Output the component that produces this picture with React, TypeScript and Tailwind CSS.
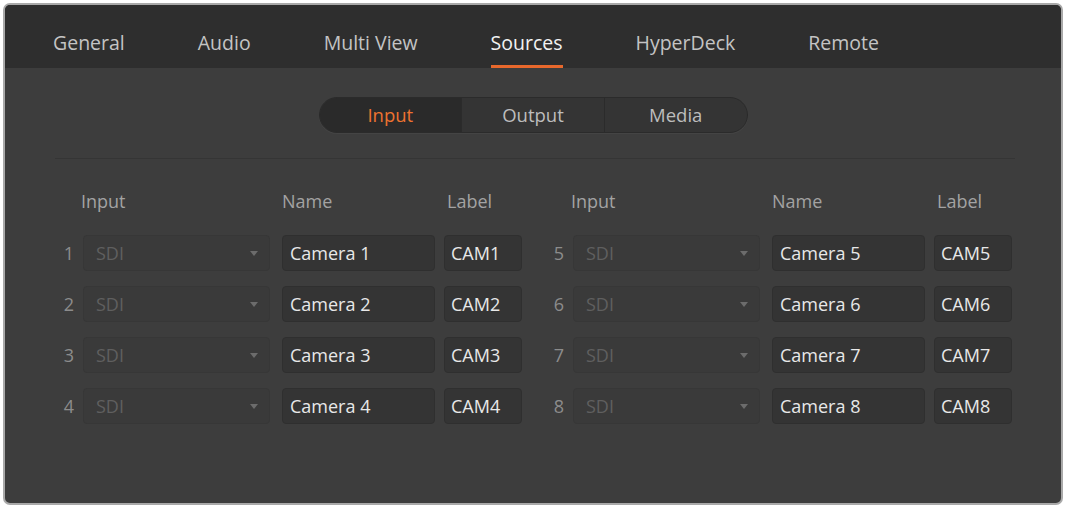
const tabs = ["General", "Audio", "Multi View", "Sources", "HyperDeck", "Remote"];
const segments = ["Input", "Output", "Media"];

type Row = { n: number; name: string; label: string };

const left: Row[] = [1, 2, 3, 4].map((n) => ({ n, name: `Camera ${n}`, label: `CAM${n}` }));
const right: Row[] = [5, 6, 7, 8].map((n) => ({ n, name: `Camera ${n}`, label: `CAM${n}` }));

function SourceGroup({ rows }: { rows: Row[] }) {
  return (
    <div className="w-[467px]">
      <div className="flex h-[24px] items-center text-[18px] text-[#a3a3a3]">
        <div className="w-[26px]" />
        <div className="w-[201px]">Input</div>
        <div className="w-[165px]">Name</div>
        <div>Label</div>
      </div>
      <div className="mt-[22px] flex flex-col gap-[15px]">
        {rows.map((r) => (
          <div key={r.n} className="flex h-[36px] items-center">
            <div className="w-[28px] text-center text-[18px] text-[#8c8c8c]">{r.n}</div>
            <div className="flex h-full w-[187px] items-center justify-between rounded-[4px] border border-[#373737] bg-[#3a3a3a] pl-[12px] pr-[10px]">
              <span className="text-[18px] text-[#5f5f5f]">SDI</span>
              <svg width="10" height="7" viewBox="0 0 10 7">
                <path d="M1 1 L9 1 L5 6 Z" fill="#6c6c6c" />
              </svg>
            </div>
            <div className="ml-[12px] flex h-full w-[153px] items-center rounded-[4px] border border-[#2f2f2f] bg-[#343434] px-[7px] text-[18px] text-[#e8e8e8]">
              {r.name}
            </div>
            <div className="ml-[9px] flex h-full w-[78px] items-center rounded-[4px] border border-[#2f2f2f] bg-[#343434] px-[6px] text-[18px] text-[#e8e8e8]">
              {r.label}
            </div>
          </div>
        ))}
      </div>
    </div>
  );
}

export default function App() {
  return (
    <div className="h-[508px] w-[1066px] bg-white p-[3px]" style={{ fontFamily: '"Open Sans", "Noto Sans", sans-serif' }}>
      <div className="h-[502px] w-[1060px] overflow-hidden rounded-[7px] border-2 border-[#a9a9a9] bg-[#3d3d3d]">
        {/* top tabs */}
        <div className="flex h-[63px] items-end gap-[55px] bg-[#2e2e2e] pl-[39px]">
          {tabs.map((t) => {
            const active = t === "Sources";
            return (
              <div
                key={t}
                className={`flex h-full flex-col justify-end px-[9px] text-[19.5px] ${active ? "text-[#f2f2f2]" : "text-[#c4c4c4]"}`}
              >
                <span className="pb-[10px] leading-[24px]">{t}</span>
                <div className={`h-[3px] ${active ? "bg-[#e8682c]" : "bg-transparent"}`} />
              </div>
            );
          })}
        </div>

        {/* segmented control */}
        <div className="mt-[29px] flex justify-center">
          <div className="flex h-[36px] w-[429px] overflow-hidden rounded-full border border-[#2b2b2b] bg-[#343434] shadow-[0_1px_0_#444]">
            {segments.map((s, i) => (
              <div
                key={s}
                className={`flex flex-1 items-center justify-center text-[18.5px] ${
                  i === 0 ? "bg-[#2a2a2a] text-[#ee7330]" : "border-l border-[#2b2b2b] text-[#bdbdbd]"
                }`}
              >
                {s}
              </div>
            ))}
          </div>
        </div>

        <div className="ml-[50px] mr-[46px] mt-[25px] h-px bg-[#353535]" />

        <div className="ml-[50px] mr-[49px] mt-[30px] flex justify-between">
          <SourceGroup rows={left} />
          <SourceGroup rows={right} />
        </div>
      </div>
    </div>
  );
}
